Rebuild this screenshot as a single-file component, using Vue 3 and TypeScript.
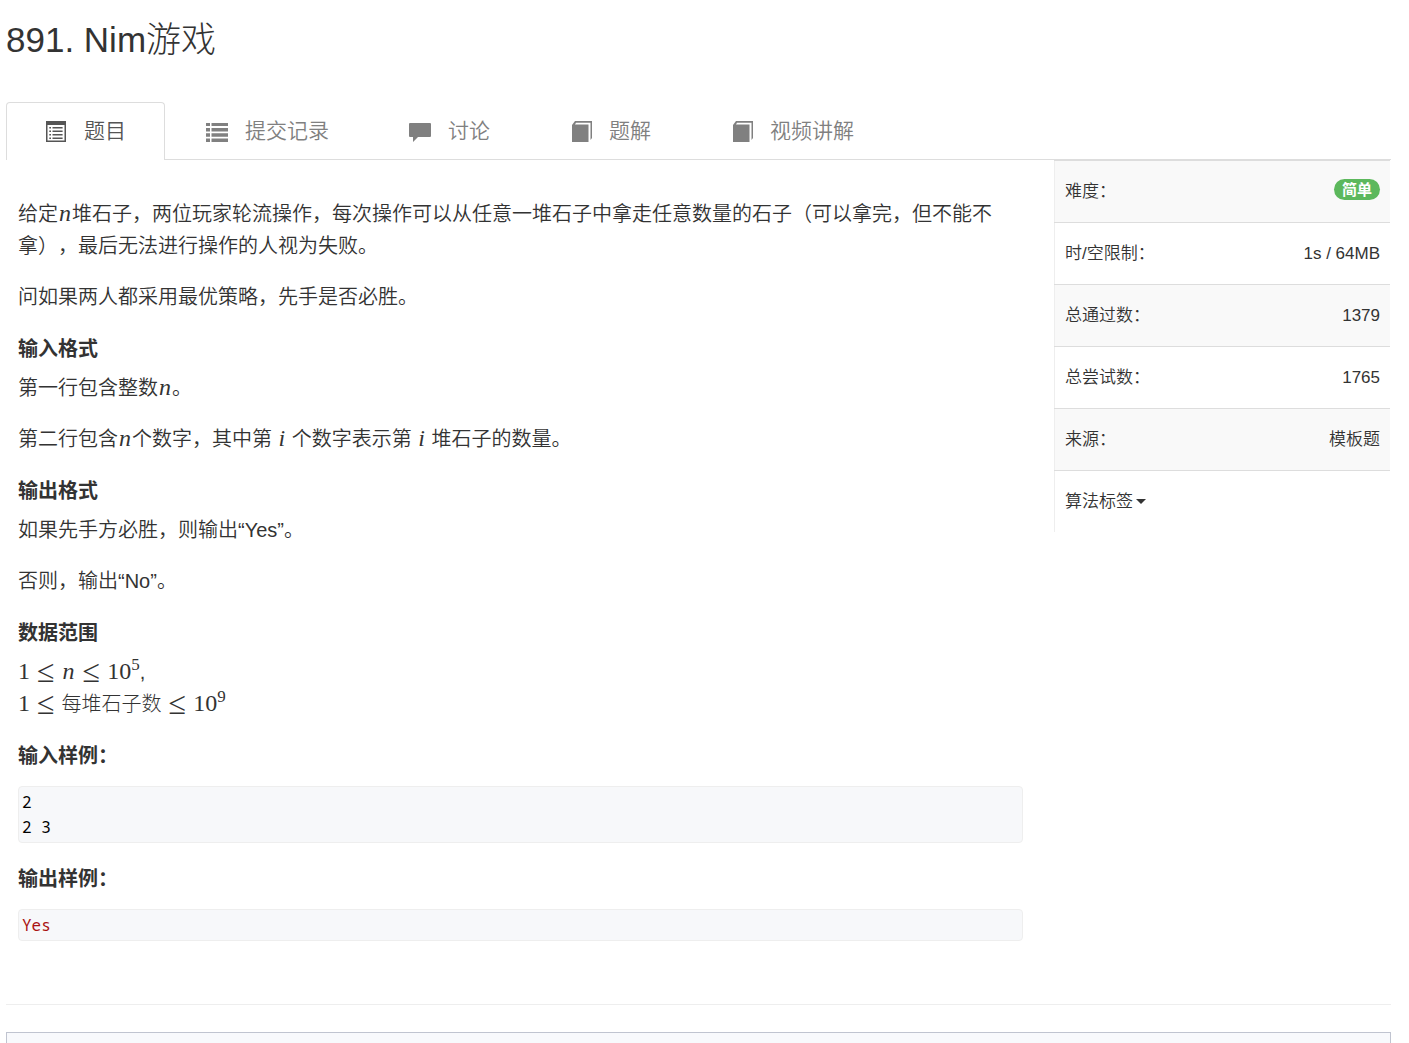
<script setup lang="ts">
interface Tab {
  label: string
  icon: 'list-alt' | 'list' | 'comment' | 'book'
  active?: boolean
}

const tabs: Tab[] = [
  { label: '题目', icon: 'list-alt', active: true },
  { label: '提交记录', icon: 'list' },
  { label: '讨论', icon: 'comment' },
  { label: '题解', icon: 'book' },
  { label: '视频讲解', icon: 'book' },
]

const facts: { name: string; value: string; badge?: boolean }[] = [
  { name: '难度：', value: '简单', badge: true },
  { name: '时/空限制：', value: '1s / 64MB' },
  { name: '总通过数：', value: '1379' },
  { name: '总尝试数：', value: '1765' },
  { name: '来源：', value: '模板题' },
]

const icons: Record<Tab['icon'], string> = {
  'list-alt':
    'M1 1H21V22H1ZM2.5 5V20.5H19.5V5ZM4.3 7H6V8.6H4.3ZM7.5 7H17.6V8.6H7.5ZM4.3 10.4H6V12H4.3ZM7.5 10.4H17.6V12H7.5ZM4.3 14H6V15.6H4.3ZM7.5 14H17.6V15.6H7.5ZM4.3 17.4H6V19H4.3ZM7.5 17.4H17.6V19H7.5Z',
  list: 'M0 3H4V6H0ZM5.5 3H22V6H5.5ZM0 8H4V11.5H0ZM5.5 8H22V11.5H5.5ZM0 13.3H4V16.8H0ZM5.5 13.3H22V16.8H5.5ZM0 18.6H4V22H0ZM5.5 18.6H22V22H5.5Z',
  comment: 'M1 3H21Q22 3 22 4V16Q22 17 21 17H9L4 22V17H1Q0 17 0 16V4Q0 3 1 3Z',
  book: 'M2 5L5 1H22V18L20.5 20V2.8H6L5 4.5H18.5V22H2Z',
}
</script>

<template>
  <div class="page">
    <h1>891. Nim游戏</h1>
    <nav class="tabs">
      <a v-for="tab in tabs" :key="tab.label" href="#" :class="['tab', { active: tab.active }]">
        <svg viewBox="0 0 22 23" aria-hidden="true"><path :d="icons[tab.icon]" fill-rule="evenodd" /></svg>
        <span>{{ tab.label }}</span>
      </a>
    </nav>

    <div class="columns">
      <main>
        <p>给定<i class="var">n</i>堆石子，两位玩家轮流操作，每次操作可以从任意一堆石子中拿走任意数量的石子（可以拿完，但不能不拿），最后无法进行操作的人视为失败。</p>
        <p>问如果两人都采用最优策略，先手是否必胜。</p>
        <h4>输入格式</h4>
        <p>第一行包含整数<i class="var">n</i>。</p>
        <p>第二行包含<i class="var">n</i>个数字，其中第 <i class="var">i</i> 个数字表示第 <i class="var">i</i> 堆石子的数量。</p>
        <h4>输出格式</h4>
        <p>如果先手方必胜，则输出“Yes”。</p>
        <p>否则，输出“No”。</p>
        <h4>数据范围</h4>
        <p>
          <span class="math">1<span class="rel">≤</span><i class="var">n</i><span class="rel">≤</span>10<sup>5</sup></span>,<br />
          <span class="math">1<span class="rel">≤</span><span class="words">每堆石子数</span><span class="rel">≤</span>10<sup>9</sup></span>
        </p>
        <h4>输入样例：</h4>
        <pre><code>2
2 3</code></pre>
        <h4>输出样例：</h4>
        <pre><code class="type">Yes</code></pre>
      </main>

      <aside>
        <table>
          <tbody>
            <tr v-for="fact in facts" :key="fact.name">
              <th scope="row">{{ fact.name }}</th>
              <td><span :class="{ badge: fact.badge }">{{ fact.value }}</span></td>
            </tr>
            <tr>
              <th scope="row" colspan="2">
                <button type="button">算法标签<span class="caret"></span></button>
              </th>
            </tr>
          </tbody>
        </table>
      </aside>
    </div>

    <hr />
    <div class="editor"></div>
  </div>
</template>

<style>
body {
  margin: 0;
  background: #fff;
}
</style>

<style scoped>
.page {
  box-sizing: border-box;
  display: flex;
  flex-direction: column;
  min-height: 100vh;
  padding: 0 18px 0 6px;
  font-family: "Liberation Sans", "Noto Sans CJK SC", sans-serif;
  font-size: 20px;
  line-height: 32px;
  color: #333;
  text-spacing-trim: space-all;
}
h1 {
  margin: 20px 0 42px;
  font-size: 35px;
  font-weight: 300;
  line-height: 40px;
}
.tabs {
  display: flex;
  gap: 2px;
  border-bottom: 1px solid #ddd;
}
.tab {
  display: flex;
  align-items: center;
  gap: 18px;
  height: 56px;
  margin-bottom: -1px;
  padding: 0 38px 1px;
  border: 1px solid transparent;
  border-bottom: 0;
  border-radius: 4px 4px 0 0;
  font-size: 21px;
  font-weight: 350;
  color: #808080;
  text-decoration: none;
}
.tab.active {
  border-color: #ddd;
  background: #fff;
  color: #555;
}
.tab svg {
  width: 22px;
  height: 23px;
  margin-right: -1px;
  fill: currentColor;
}
.columns {
  display: flex;
  align-items: flex-start;
}
main {
  flex: 1;
  min-width: 0;
  padding: 38px 31px 0 12px;
  font-weight: 350;
}
p {
  margin: 0 0 19px;
}
h4 {
  margin: 25px 0 12px;
  font-size: 20px;
  font-weight: 700;
  line-height: 22px;
}
.var,
.math {
  font-family: "Liberation Serif", "Noto Sans CJK SC", serif;
  font-size: 24px;
  line-height: 24px;
  font-weight: 400;
}
.var {
  padding: 0 1px;
}
.rel {
  margin: 0 7px;
  font-size: 32px;
  line-height: 0;
  vertical-align: -3px;
}
.words {
  font-size: 20px;
  font-weight: 300;
}
sup {
  font-size: 17px;
  line-height: 0;
  vertical-align: 9px;
}
pre {
  margin: 19px 0 0;
  padding: 3px 3px 2px;
  border: 1px solid #eee;
  border-radius: 4px;
  background: #f7f8fa;
  font-size: 16px;
  line-height: 25px;
  color: #000;
}
code {
  font-family: "Noto Sans Mono", "DejaVu Sans Mono", monospace;
  font-weight: 400;
}
.type {
  color: #a11;
}
aside {
  flex: 0 0 337px;
  box-sizing: border-box;
  padding-right: 1px;
}
table {
  width: 100%;
  border-collapse: collapse;
  border-left: 1px solid #eee;
  font-size: 17px;
  line-height: 25px;
}
th,
td {
  height: 61px;
  padding: 0 10px;
  border-top: 1px solid #ddd;
  font-weight: 350;
  text-align: left;
}
td {
  text-align: right;
}
tr:nth-child(odd) {
  background: #f9f9f9;
}
tr:last-child {
  background: #fff;
}
.badge {
  display: inline-block;
  padding: 0 8px;
  border-radius: 11px;
  background: #5cb85c;
  font-size: 15px;
  font-weight: 700;
  line-height: 21px;
  vertical-align: 2px;
  color: #fff;
}
button {
  display: inline-flex;
  align-items: center;
  gap: 3px;
  padding: 0;
  border: 0;
  background: none;
  font: inherit;
  color: inherit;
}
.caret {
  border: 5px solid transparent;
  border-top-color: currentColor;
  border-bottom: 0;
}
hr {
  width: 100%;
  margin: 63px 0 27px;
  border: 0;
  border-top: 1px solid #eee;
}
.editor {
  flex: 1;
  border: 1px solid #c0c4d0;
  border-bottom: 0;
  background: #f8f9fc;
}
</style>
